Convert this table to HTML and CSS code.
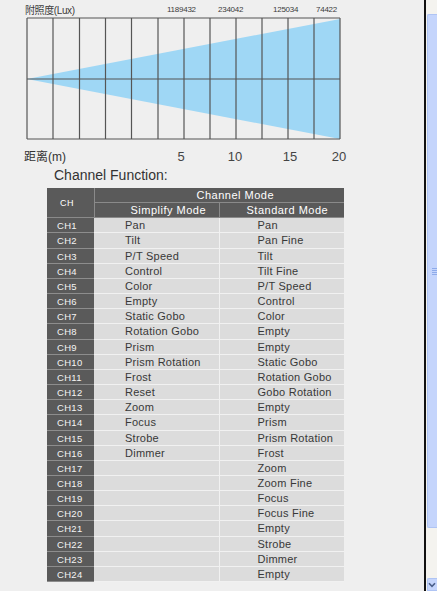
FILE: index.html
```html
<!DOCTYPE html>
<html lang="zh">
<head>
<meta charset="utf-8">
<title>Channel Function</title>
<link rel="stylesheet" href="styles.css">
</head>
<body>
<div class="page">
  <main class="content">
    <svg class="chart" width="424" height="167" viewBox="0 0 424 167">
      <text class="lux-label" x="25" y="14">附照度(Lux)</text>
      <text class="lux-value" x="167" y="11.5">1189432</text>
      <text class="lux-value" x="218" y="11.5">234042</text>
      <text class="lux-value" x="273" y="11.5">125034</text>
      <text class="lux-value" x="316" y="11.5">74422</text>
      <polygon class="beam" points="27,79 340,19 340,139"/>
      <g class="grid">
        <line x1="27" y1="18" x2="340" y2="18"/>
        <line x1="27" y1="79" x2="340" y2="79"/>
        <line x1="27" y1="139" x2="340" y2="139"/>
        <line x1="27" y1="18" x2="27" y2="139"/>
        <line x1="53" y1="18" x2="53" y2="139"/>
        <line x1="79.5" y1="18" x2="79.5" y2="139"/>
        <line x1="105.5" y1="18" x2="105.5" y2="139"/>
        <line x1="131.5" y1="18" x2="131.5" y2="139"/>
        <line x1="158" y1="18" x2="158" y2="139"/>
        <line x1="184" y1="18" x2="184" y2="139"/>
        <line x1="210" y1="18" x2="210" y2="139"/>
        <line x1="236" y1="18" x2="236" y2="139"/>
        <line x1="262" y1="18" x2="262" y2="139"/>
        <line x1="288" y1="18" x2="288" y2="139"/>
        <line x1="314" y1="18" x2="314" y2="139"/>
        <line x1="340" y1="18" x2="340" y2="139"/>
      </g>
      <text class="axis-label" x="24" y="161">距离(m)</text>
      <text class="axis-tick" x="181" y="161">5</text>
      <text class="axis-tick" x="235" y="161">10</text>
      <text class="axis-tick" x="290" y="161">15</text>
      <text class="axis-tick" x="339" y="161">20</text>
    </svg>

    <h2 class="section-title">Channel Function:</h2>

    <table class="channels">
      <colgroup>
        <col class="col-ch">
        <col class="col-mode">
        <col class="col-mode">
      </colgroup>
      <thead>
        <tr>
          <th class="ch-head" rowspan="2">CH</th>
          <th class="group-head" colspan="2">Channel Mode</th>
        </tr>
        <tr>
          <th class="simplify-head">Simplify Mode</th>
          <th class="standard-head">Standard Mode</th>
        </tr>
      </thead>
      <tbody>
        <tr><td class="ch">CH1</td><td class="simplify">Pan</td><td class="standard">Pan</td></tr>
        <tr><td class="ch">CH2</td><td class="simplify">Tilt</td><td class="standard">Pan Fine</td></tr>
        <tr><td class="ch">CH3</td><td class="simplify">P/T Speed</td><td class="standard">Tilt</td></tr>
        <tr><td class="ch">CH4</td><td class="simplify">Control</td><td class="standard">Tilt Fine</td></tr>
        <tr><td class="ch">CH5</td><td class="simplify">Color</td><td class="standard">P/T Speed</td></tr>
        <tr><td class="ch">CH6</td><td class="simplify">Empty</td><td class="standard">Control</td></tr>
        <tr><td class="ch">CH7</td><td class="simplify">Static Gobo</td><td class="standard">Color</td></tr>
        <tr><td class="ch">CH8</td><td class="simplify">Rotation Gobo</td><td class="standard">Empty</td></tr>
        <tr><td class="ch">CH9</td><td class="simplify">Prism</td><td class="standard">Empty</td></tr>
        <tr><td class="ch">CH10</td><td class="simplify">Prism Rotation</td><td class="standard">Static Gobo</td></tr>
        <tr><td class="ch">CH11</td><td class="simplify">Frost</td><td class="standard">Rotation Gobo</td></tr>
        <tr><td class="ch">CH12</td><td class="simplify">Reset</td><td class="standard">Gobo Rotation</td></tr>
        <tr><td class="ch">CH13</td><td class="simplify">Zoom</td><td class="standard">Empty</td></tr>
        <tr><td class="ch">CH14</td><td class="simplify">Focus</td><td class="standard">Prism</td></tr>
        <tr><td class="ch">CH15</td><td class="simplify">Strobe</td><td class="standard">Prism Rotation</td></tr>
        <tr><td class="ch">CH16</td><td class="simplify">Dimmer</td><td class="standard">Frost</td></tr>
        <tr><td class="ch">CH17</td><td class="simplify"></td><td class="standard">Zoom</td></tr>
        <tr><td class="ch">CH18</td><td class="simplify"></td><td class="standard">Zoom Fine</td></tr>
        <tr><td class="ch">CH19</td><td class="simplify"></td><td class="standard">Focus</td></tr>
        <tr><td class="ch">CH20</td><td class="simplify"></td><td class="standard">Focus Fine</td></tr>
        <tr><td class="ch">CH21</td><td class="simplify"></td><td class="standard">Empty</td></tr>
        <tr><td class="ch">CH22</td><td class="simplify"></td><td class="standard">Strobe</td></tr>
        <tr><td class="ch">CH23</td><td class="simplify"></td><td class="standard">Dimmer</td></tr>
        <tr><td class="ch">CH24</td><td class="simplify"></td><td class="standard">Empty</td></tr>
      </tbody>
    </table>
  </main>

  <div class="divider"></div>

  <div class="scrollbar">
    <div class="sb-top"></div>
    <div class="sb-thumb"><span class="sb-grip"></span></div>
    <div class="sb-track"></div>
    <div class="sb-down">
      <svg width="8" height="6" viewBox="0 0 8 6"><path d="M1 1.2 L4 4.4 L7 1.2" fill="none" stroke="#4a5f8a" stroke-width="1.6"/></svg>
    </div>
  </div>
</div>
</body>
</html>
```

FILE: styles.css
```css
html, body {
  margin: 0;
  padding: 0;
  background: #efefef;
}

body {
  font-family: "Liberation Sans", Arial, "Noto Sans CJK SC", sans-serif;
  color: #333;
}

.page {
  display: flex;
  width: 437px;
  height: 591px;
  overflow: hidden;
}

.content {
  flex: none;
  width: 424px;
}

/* chart */
.chart {
  display: block;
}

.lux-label {
  font-family: "Liberation Sans", "Noto Sans CJK SC", sans-serif;
  font-size: 10px;
  letter-spacing: -0.4px;
  fill: #3c3c3c;
}

.lux-value {
  font-family: "Liberation Sans", sans-serif;
  font-size: 8px;
  letter-spacing: -0.25px;
  fill: #3c3c3c;
}

.beam {
  fill: #9fd7f5;
}

.grid line {
  stroke: #555;
  stroke-width: 1.2;
}

.axis-label {
  font-family: "Liberation Sans", "Noto Sans CJK SC", sans-serif;
  font-size: 12px;
  fill: #333;
}

.axis-tick {
  font-family: "Liberation Sans", sans-serif;
  font-size: 13px;
  text-anchor: middle;
  fill: #444;
}

.section-title {
  margin: 0 0 5px 54px;
  font-size: 14px;
  line-height: 16px;
  font-weight: normal;
  color: #333;
}

/* table */
.channels {
  margin-left: 47px;
  width: 297px;
  table-layout: fixed;
  border-collapse: collapse;
  font-size: 11px;
}

.col-ch { width: 47px; }
.col-mode { width: 125px; }

.channels th,
.channels td {
  padding: 1px 0 0 0;
  line-height: 13.15px;
  text-align: left;
  font-weight: normal;
  white-space: nowrap;
  overflow: hidden;
}

.channels th {
  background: #5a5a5a;
  color: #fff;
  letter-spacing: 0.5px;
  border-bottom: 1px solid #8a8a8a;
  border-left: 1px solid #8a8a8a;
}

.channels .ch-head {
  padding-left: 13px;
  font-size: 9px;
  border-left: none;
}

.channels .group-head { padding-left: 102px; }
.channels .simplify-head { padding-left: 36px; }
.channels .standard-head { padding-left: 27px; }

.channels td.ch {
  background: #5a5a5a;
  color: #f4f4f4;
  font-size: 9.5px;
  letter-spacing: 0.3px;
  padding-left: 10px;
  border-bottom: 1px solid #8d8d8d;
}

.channels td.simplify,
.channels td.standard {
  background: #dcdcdc;
  color: #383838;
  letter-spacing: 0.25px;
  border-bottom: 1px solid #f1f1f1;
}

.channels td.simplify { padding-left: 31px; }

.channels td.standard {
  padding-left: 38px;
  border-left: 1px solid #f1f1f1;
}

/* window edge and scrollbar */
.divider {
  flex: none;
  width: 2px;
  background: #111;
}

.scrollbar {
  flex: none;
  width: 11px;
  padding-left: 1px;
  box-sizing: border-box;
  display: flex;
  flex-direction: column;
  background: #f4f3ef;
}

.sb-top {
  flex: none;
  height: 14px;
}

.sb-thumb {
  flex: none;
  height: 514px;
  box-sizing: border-box;
  background: #c5d5fc;
  border: 1px solid #afc4f4;
  border-right: none;
  border-radius: 2px 0 0 2px;
  display: flex;
  align-items: center;
  padding-left: 4px;
}

.sb-grip {
  width: 6px;
  height: 7px;
  background: repeating-linear-gradient(#8eabea 0 1px, transparent 1px 2px);
}

.sb-track {
  flex: 1;
}

.sb-down {
  flex: none;
  height: 13px;
  box-sizing: border-box;
  background: #c5d5fc;
  border: 1px solid #afc4f4;
  border-right: none;
  border-radius: 2px 0 0 0;
  display: flex;
  align-items: center;
  justify-content: flex-start;
  padding-left: 0;
}
```
